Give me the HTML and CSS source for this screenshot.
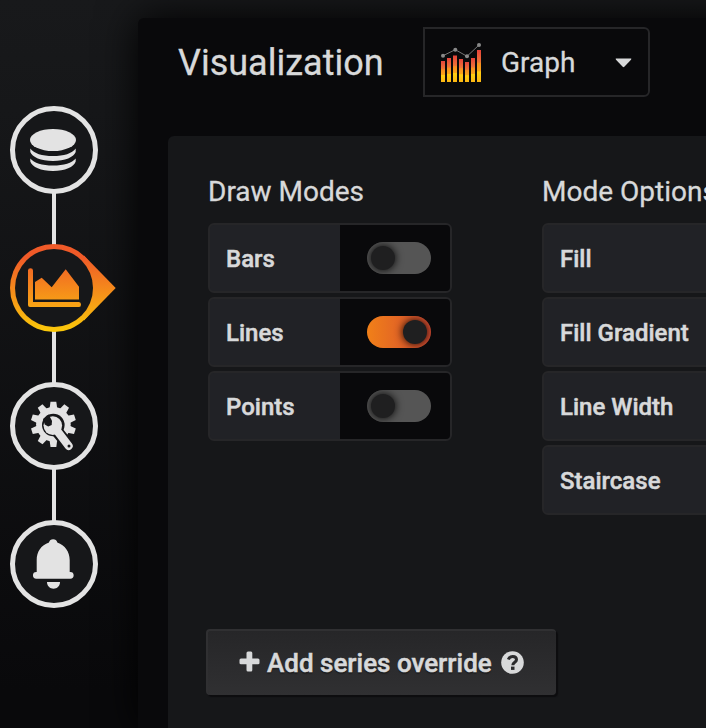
FILE: index.html
```
<!DOCTYPE html>
<html lang="en">
<head>
<meta charset="utf-8">
<title>Visualization</title>
<link rel="stylesheet" href="styles.css">
</head>
<body>
<div class="page">
  <nav class="tabs">
    <a class="tab">
      <svg class="tab-icon" viewBox="0 0 88 88">
        <circle class="ring" cx="44" cy="44" r="41.5"/>
        <ellipse cx="43" cy="34" rx="23" ry="11"/>
        <path d="M20.3 42.5C24 47.5 32 50 43 50S62 47.5 65.700 42.500V46C64 51 55 55 43 55S22 51 20.300 46Z"/>
        <path d="M20.300 52.500C24 57 32 59.500 43 59.500S62 57 65.700 52.500V55.500C64 61 55 65 43 65S22 61 20.300 55.500Z"/>
      </svg>
    </a>
    <a class="tab">
      <svg class="tab-icon" viewBox="0 0 88 88">
        <defs>
          <linearGradient id="flame" gradientUnits="userSpaceOnUse" x1="0" y1="0" x2="0" y2="88">
            <stop offset="0.15" stop-color="#f05a28"/>
            <stop offset="1" stop-color="#fbca0a"/>
          </linearGradient>
        </defs>
        <g fill="url(#flame)">
          <path d="M74 11.500L105.700 44L74 76.500Z"/>
          <circle cx="44" cy="44" r="44"/>
          <circle class="disc" cx="44" cy="44" r="39"/>
          <path d="M25 38L31.700 33.700L41.700 43.300L55.700 25.300L69 42.700V55.500H25Z"/>
          <path d="M18 26.500Q18 24.300 20.500 24.300T23 26.500V58H69Q71 58 71 60.500T69 63H20Q18 63 18 61Z"/>
        </g>
      </svg>
    </a>
    <a class="tab">
      <svg class="tab-icon" viewBox="0 0 88 88">
        <circle class="ring" cx="44" cy="44" r="41.5"/>
        <g transform="translate(43.400 42.300)">
          <circle r="17.300"/>
          <g id="teeth">
            <path id="tooth" d="M-3.800 -16L-2.900 -22.600H2.900L3.800 -16Z"/>
            <use href="#tooth" transform="rotate(36)"/>
            <use href="#tooth" transform="rotate(72)"/>
            <use href="#tooth" transform="rotate(108)"/>
            <use href="#tooth" transform="rotate(180)"/>
            <use href="#tooth" transform="rotate(216)"/>
            <use href="#tooth" transform="rotate(252)"/>
            <use href="#tooth" transform="rotate(288)"/>
            <use href="#tooth" transform="rotate(324)"/>
          </g>
        </g>
        <circle class="disc" cx="43.300" cy="43" r="11.300"/>
        <path class="disc-stroke" d="M46 48L59 64"/>
        <circle cx="42.800" cy="43.600" r="9.300"/>
        <path class="handle" d="M45 46L58.700 64"/>
        <path class="disc" d="M33 37L38.600 32.500L42 38.800L41.700 43L38.200 44.600L34.700 42.400Z"/>
        <circle class="disc" cx="59" cy="64" r="1.500"/>
      </svg>
    </a>
    <a class="tab">
      <svg class="tab-icon" viewBox="0 0 88 88">
        <circle class="ring" cx="44" cy="44" r="41.5"/>
        <path d="M39 22.500A4.300 4.300 0 0 1 47.300 22.500C55 25 59.700 32 59.700 40V52H60.300A3.300 3.300 0 0 1 60.300 58.700H26.300A3.300 3.300 0 0 1 26.300 52H26.700V40C26.700 32 31 25 39 22.500Z"/>
        <path d="M37 62H50C50 66 47 68.700 43.500 68.700S37 66 37 62Z"/>
      </svg>
    </a>
  </nav>

  <main class="editor">
    <header class="toolbar">
      <h1 class="title">Visualization</h1>
      <div class="picker">
        <svg class="graph-icon" viewBox="0 0 41 40">
          <defs>
            <linearGradient id="bar" x1="0" y1="0" x2="0" y2="1">
              <stop offset="0" stop-color="#e5423b"/>
              <stop offset="0.38" stop-color="#ee7436"/>
              <stop offset="0.42" stop-color="#f78f20"/>
              <stop offset="0.660" stop-color="#fba618"/>
              <stop offset="0.680" stop-color="#ffd011"/>
              <stop offset="1" stop-color="#fdb713"/>
            </linearGradient>
          </defs>
          <g fill="url(#bar)">
            <rect x="0" y="18" width="4" height="21"/>
            <rect x="6" y="15" width="4" height="24"/>
            <rect x="12" y="12.500" width="4" height="26.500"/>
            <rect x="18" y="16" width="4" height="23"/>
            <rect x="24" y="19" width="4" height="20"/>
            <rect x="30" y="15" width="4" height="24"/>
            <rect x="36" y="7" width="4" height="32"/>
          </g>
          <path class="trend" d="M2 12.700L14.300 6.700L26 13.300L38 2"/>
          <g class="dots">
            <circle cx="2" cy="12.700" r="2"/>
            <circle cx="14.300" cy="6.700" r="2"/>
            <circle cx="26" cy="13.300" r="2"/>
            <circle cx="38" cy="2" r="2"/>
          </g>
        </svg>
        <span class="picker-name">Graph</span>
        <svg class="caret" viewBox="0 0 17 10"><path d="M1.200 0.500H15.800Q17 0.500 16 1.700L9.300 8.800Q8.500 9.600 7.700 8.800L1 1.700Q0 0.500 1.200 0.500Z"/></svg>
      </div>
    </header>

    <section class="options">
      <div class="groups">
        <div class="group modes">
          <h2 class="group-title">Draw Modes</h2>
          <div class="row"><span class="label">Bars</span><span class="field"><i class="switch"></i></span></div>
          <div class="row"><span class="label">Lines</span><span class="field"><i class="switch on"></i></span></div>
          <div class="row"><span class="label">Points</span><span class="field"><i class="switch"></i></span></div>
        </div>
        <div class="group">
          <h2 class="group-title">Mode Options</h2>
          <div class="row"><span class="label">Fill</span></div>
          <div class="row"><span class="label">Fill Gradient</span></div>
          <div class="row"><span class="label">Line Width</span></div>
          <div class="row"><span class="label">Staircase</span></div>
        </div>
      </div>
      <button class="add">
        <svg class="plus" viewBox="0 0 21 21"><path d="M7.500 2Q7.500 0.500 9 0.500H12Q13.300 0.500 13.300 2V7.500H19Q20.500 7.500 20.500 9V12Q20.500 13.300 19 13.300H13.300V19Q13.300 20.500 12 20.500H9Q7.500 20.500 7.500 19V13.300H2Q0.500 13.300 0.500 12V9Q0.500 7.500 2 7.500H7.500Z"/></svg>
        <span>Add series override</span>
        <svg class="help" viewBox="0 0 23 23">
          <circle cx="11.500" cy="11.500" r="11.300"/>
          <path class="hook" d="M7.300 8.500C8.200 6.500 9.700 5.600 11.700 5.600C14 5.600 15.500 7 15.500 8.800C15.500 11.400 11.800 11.300 11.800 14.200"/>
          <rect class="dot" x="10" y="15.600" width="3.500" height="3.300"/>
        </svg>
      </button>
    </section>
  </main>
</div>
</body>
</html>
```
FILE: styles.css
```
* { box-sizing: border-box; }

body {
  margin: 0;
  overflow: hidden;
  font-family: Roboto, sans-serif;
  color: #d8d9da;
  -webkit-text-stroke: 0.3px;
}

.page {
  display: flex;
  width: 706px;
  height: 728px;
  overflow: hidden;
  background: linear-gradient(#18191b 0, #161719 110px, #09090b 690px);
}

.tabs {
  display: flex;
  flex: none;
  flex-direction: column;
  align-items: center;
  gap: 50px;
  width: 138px;
  padding: 106px 30px 0 0;
}

.tab {
  position: relative;
  width: 88px;
  height: 88px;
}

.tab + .tab::before {
  content: "";
  position: absolute;
  left: 42px;
  top: -51px;
  width: 4px;
  height: 52px;
  background: #e3e3e3;
}

.tab-icon {
  position: relative;
  z-index: 1;
  display: block;
  width: 88px;
  height: 88px;
  overflow: visible;
  fill: #e3e3e3;
}

.ring { fill: #161719; stroke: #e3e3e3; stroke-width: 5; }
.disc { fill: #161719; }
.disc-stroke { stroke: #161719; stroke-width: 12; stroke-linecap: round; }
.handle { stroke: #e3e3e3; stroke-width: 8px; stroke-linecap: round; }

.editor {
  display: flex;
  flex: none;
  flex-direction: column;
  width: 700px;
  margin-top: 18px;
  padding-left: 30px;
  background: #09090b;
  border-radius: 6px 0 0;
  box-shadow: 0 0 40px #000;
}

.toolbar {
  display: flex;
  flex: none;
  align-items: flex-start;
  gap: 39px;
  height: 118px;
  padding: 9px 0 0 10px;
}

.title {
  margin: 0;
  width: 206px;
  font-size: 36px;
  font-weight: 400;
  line-height: 72px;
}

.picker {
  display: flex;
  align-items: center;
  width: 227px;
  height: 70px;
  padding: 0 16px;
  border: 2px solid #262628;
  border-radius: 0 6px 6px 0;
}

.graph-icon { flex: none; width: 41px; height: 40px; margin-top: 1px; overflow: visible; }
.trend { fill: none; stroke: #777; stroke-width: 1; }
.dots { fill: #898989; }
.picker-name { flex: none; width: 133px; padding-left: 19px; font-size: 28px; }
.caret { flex: none; width: 17px; height: 10px; margin-top: 2px; fill: #d8d9da; }

.options {
  flex: 1;
  padding: 37px 0 0 40px;
  background: #161719;
  border-radius: 6px 0 0;
}

.groups {
  display: flex;
  align-items: flex-start;
  gap: 90px;
  height: 456px;
}

.group {
  display: flex;
  flex: none;
  flex-direction: column;
  gap: 4px;
  width: 400px;
}

.modes { width: 244px; }

.group-title {
  margin: 0 0 8px;
  font-size: 28px;
  font-weight: 400;
  line-height: 38px;
}

.row {
  display: flex;
  height: 70px;
  border: 2px solid #262628;
  border-radius: 6px;
  background: #212226;
  overflow: hidden;
}

.label {
  flex: 1;
  padding-left: 16px;
  font-size: 24px;
  font-weight: 500;
  line-height: 69px;
  -webkit-text-stroke: 0.5px;
}

.field {
  display: flex;
  align-items: center;
  justify-content: center;
  width: 110px;
  padding-left: 8px;
  background: #09090b;
}

.switch {
  display: flex;
  width: 64px;
  height: 32px;
  padding: 4px;
  border-radius: 16px;
  background: #555;
  overflow: hidden;
}

.switch::before {
  content: "";
  width: 24px;
  height: 24px;
  border-radius: 50%;
  background: #1f1f20;
  box-shadow: 0 0 8px #000;
}

.switch.on {
  justify-content: flex-end;
  background: linear-gradient(90deg, #f18018, #d44b32);
}

.add {
  display: flex;
  align-items: center;
  width: 350px;
  height: 66px;
  margin-left: -2px;
  padding: 0 0 0 31px;
  border: solid #303032;
  border-width: 2px 0 0 2px;
  border-radius: 4px;
  background: linear-gradient(#262628, #303032);
  box-shadow: 2px 2px 1px #0d0d0f;
  color: #d8d9da;
  font: 500 26px Roboto, sans-serif;
  -webkit-text-stroke: 0.5px;
  text-shadow: 0 2px 1px rgba(0, 0, 0, 0.3);
}

.plus { width: 21px; height: 21px; margin-right: 7px; margin-bottom: 3px; fill: #d8d9da; }
.help { width: 23px; height: 23px; margin: 0 0 2px 9px; fill: #d8d9da; }
.hook { fill: none; stroke: #2a2a2c; stroke-width: 3px; }
.dot { fill: #2a2a2c; }
```
